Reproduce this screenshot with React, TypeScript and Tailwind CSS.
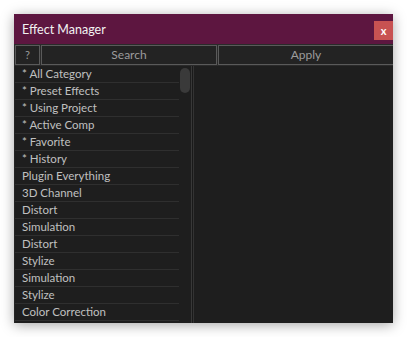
import React from "react";

const items = [
  "* All Category",
  "* Preset Effects",
  "* Using Project",
  "* Active Comp",
  "* Favorite",
  "* History",
  "Plugin Everything",
  "3D Channel",
  "Distort",
  "Simulation",
  "Distort",
  "Stylize",
  "Simulation",
  "Stylize",
  "Color Correction",
];

export default function App() {
  return (
    <div
      className="w-[407px] h-[337px] bg-white pt-[14px] pl-[14px]"
      style={{ fontFamily: 'Lato, "Noto Sans", sans-serif' }}
    >
      <div className="w-[379px] h-[309px] bg-[#252525] flex flex-col shadow-[0_2px_12px_rgba(0,0,0,0.35)] overflow-hidden">
        <div className="h-[30px] bg-[#5d1640] flex items-start shrink-0">
          <div className="pl-[8px] pt-[7px] text-[12.5px] leading-[18px] text-[#f2f2f2]">
            Effect Manager
          </div>
          <div className="ml-auto mt-[7px] w-[19px] h-[19px] bg-[#c85252] flex items-center justify-center text-white text-[11px] font-bold leading-none">
            x
          </div>
        </div>
        <div className="h-[22px] flex gap-[1px] pl-[1px] pt-[1px] shrink-0 bg-[#2a2a2a]">
          <div className="w-[25px] h-[20px] border border-[#5a5a5a] bg-[#232323] flex items-center justify-center text-[11px] text-[#9a9a9a]">
            ?
          </div>
          <div className="w-[176px] h-[20px] border border-[#5a5a5a] bg-[#232323] flex items-center justify-center text-[12px] text-[#9c9c9c]">
            Search
          </div>
          <div className="flex-1 h-[20px] border border-[#5a5a5a] border-r-0 bg-[#232323] flex items-center justify-center text-[12px] text-[#9c9c9c]">
            Apply
          </div>
        </div>
        <div className="flex flex-1 min-h-0 bg-[#1e1e1e]">
          <div className="w-[1px] bg-[#252525]" />
          <div className="w-[164px] flex flex-col">
            {items.map((t, i) => (
              <div
                key={i}
                className="h-[17px] shrink-0 border-b border-[#2f2f2f] pl-[7px] text-[11.5px] leading-[16px] text-[#c0c0c0] whitespace-nowrap"
              >
                {t}
              </div>
            ))}
          </div>
          <div className="w-[12px] pl-[1px] pt-[2px]">
            <div className="w-[10px] h-[25px] rounded-[5px] bg-[#3a3a3a]" />
          </div>
          <div className="w-[1px] bg-[#383838]" />
          <div className="w-[1px] bg-[#1a1a1a]" />
          <div className="w-[1px] bg-[#333333]" />
          <div className="flex-1 bg-[#1e1e1e]" />
        </div>
      </div>
    </div>
  );
}
